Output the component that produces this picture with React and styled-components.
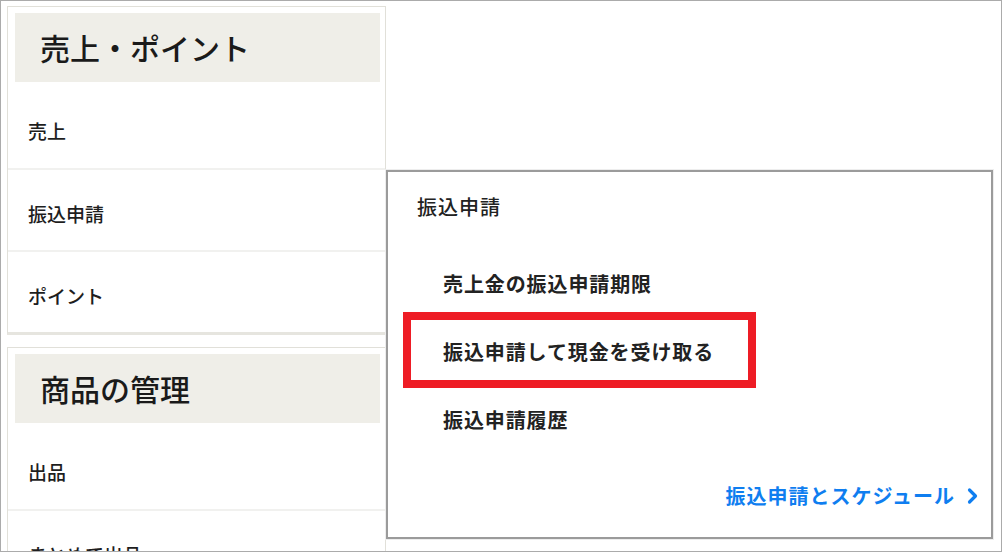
import React from "react";
import styled, { createGlobalStyle } from "styled-components";

const Global = createGlobalStyle`
  html, body { margin: 0; padding: 0; background: #fff; }
  body { font-family: "Noto Sans CJK JP", "Noto Sans", sans-serif; color: #222; }
  * { box-sizing: border-box; }
`;

const Frame = styled.div`
  position: relative;
  width: 1002px;
  height: 552px;
  border: 1px solid #ababab;
  overflow: hidden;
  padding: 5px 0 0 6px;
  background: #fff;
`;

const Sidebar = styled.div`
  width: 379px;
  display: flex;
  flex-direction: column;
  gap: 12px;
`;

const Card = styled.section`
  border: 1px solid #e1e0d9;
  border-bottom: 3px solid #e6e5df;
  background: #fff;
`;

const CardHeader = styled.h2`
  margin: 6px 5px 4px 7px;
  height: 69px;
  background: #efeee8;
  display: flex;
  align-items: center;
  padding: 0 0 2px 25px;
  font-size: 30px;
  font-weight: 500;
  color: #1a1a1a;
  letter-spacing: 0;
`;

const Row = styled.div`
  height: 82px;
  display: flex;
  align-items: center;
  padding: 6px 0 0 20px;
  font-size: 19px;
  font-weight: 500;
  color: #1e1e1e;
  border-top: ${(p) => (p.$first ? "none" : "2px solid #f1f1ef")};
`;

const Popover = styled.div`
  position: absolute;
  left: 385px;
  top: 169px;
  width: 607px;
  height: 369px;
  background: #fff;
  border: 2px solid #9b9b9b;
  box-shadow: 0 0 0 1px #ededed;
  display: flex;
  flex-direction: column;
  padding: 20px 12px 0 29px;
`;

const PopTitle = styled.div`
  font-size: 20px;
  line-height: 30px;
  letter-spacing: 1px;
  font-weight: 500;
  color: #222;
  margin-bottom: 30px;
`;

const ItemList = styled.div`
  display: flex;
  flex-direction: column;
  gap: 8px;
  margin-left: -6px;
`;

const Item = styled.div`
  width: 337px;
  height: 60px;
  display: flex;
  align-items: center;
  padding: 3px 0 0 32px;
  font-size: 20px;
  font-weight: 700;
  letter-spacing: 0.9px;
  color: #222;
  outline: ${(p) => (p.$highlight ? "8px solid #ee1c25" : "none")};
`;

const LinkRow = styled.div`
  margin-top: 33px;
  display: flex;
  justify-content: flex-end;
`;

const MoreLink = styled.a`
  display: inline-flex;
  align-items: center;
  gap: 11px;
  font-size: 20px;
  font-weight: 700;
  letter-spacing: 1px;
  line-height: 30px;
  color: #0f7ef0;
  text-decoration: none;
`;

const Chevron = () => (
  <svg width="13" height="18" viewBox="0 0 13 18" aria-hidden="true">
    <path d="M3.5 3 L9.5 9 L3.5 15" fill="none" stroke="#0f7ef0" strokeWidth="3.2" strokeLinecap="round" strokeLinejoin="round" />
  </svg>
);

const sections = [
  { title: "売上・ポイント", rows: ["売上", "振込申請", "ポイント"] },
  { title: "商品の管理", rows: ["出品", "まとめて出品", "商品一覧"] },
];

const items = [
  { label: "売上金の振込申請期限" },
  { label: "振込申請して現金を受け取る", highlight: true },
  { label: "振込申請履歴" },
];

export default function App() {
  return (
    <>
      <Global />
      <Frame>
        <Sidebar>
          {sections.map((s) => (
            <Card key={s.title}>
              <CardHeader>{s.title}</CardHeader>
              {s.rows.map((r, i) => (
                <Row key={r} $first={i === 0}>
                  {r}
                </Row>
              ))}
            </Card>
          ))}
        </Sidebar>
        <Popover>
          <PopTitle>振込申請</PopTitle>
          <ItemList>
            {items.map((it) => (
              <Item key={it.label} $highlight={it.highlight}>
                {it.label}
              </Item>
            ))}
          </ItemList>
          <LinkRow>
            <MoreLink href="#">
              振込申請とスケジュール
              <Chevron />
            </MoreLink>
          </LinkRow>
        </Popover>
      </Frame>
    </>
  );
}
